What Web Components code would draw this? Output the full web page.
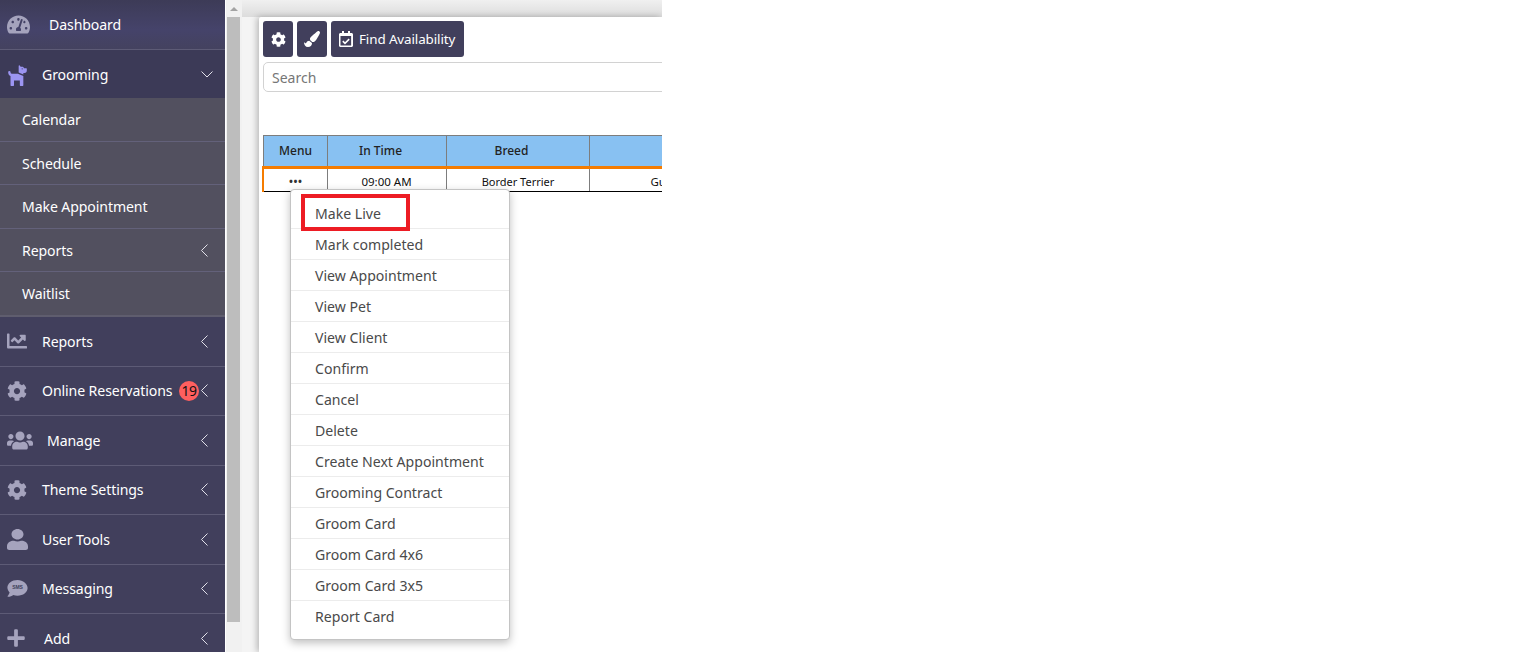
<!DOCTYPE html>
<html>
<head>
<meta charset="utf-8">
<title>Grooming</title>
<style>
  html, body { margin: 0; padding: 0; background: #fff; height: 100%; overflow: hidden; }
  body { font-family: "Noto Sans", "Open Sans", "Liberation Sans", sans-serif; }
</style>
</head>
<body>
<app-shell>
  <side-nav slot="nav">
    <nav-item label="Dashboard" text-x="49" h="49.5" tone="top" no-arrow>
      <svg slot="icon" width="23" height="21" viewBox="0 0 576 512"><path fill="#a5a3bd" d="M288 32C128.940 32 0 160.940 0 320c0 52.800 14.250 102.260 39.060 144.800 5.610 9.620 16.300 15.200 27.440 15.200h443c11.140 0 21.830-5.580 27.440-15.200C561.750 422.260 576 372.800 576 320c0-159.060-128.940-288-288-288zm0 64c14.710 0 26.580 10.130 30.320 23.650-1.110 2.260-2.640 4.230-3.450 6.670l-9.220 27.670c-5.130 3.490-10.970 6.010-17.640 6.010-17.670 0-32-14.330-32-32S270.330 96 288 96zM96 384c-17.670 0-32-14.330-32-32s14.330-32 32-32 32 14.330 32 32-14.330 32-32 32zm48-160c-17.670 0-32-14.330-32-32s14.330-32 32-32 32 14.330 32 32-14.330 32-32 32zm246.770-72.410l-61.330 184C343.130 347.330 352 364.540 352 384c0 11.720-3.380 22.550-8.880 32H232.880c-5.500-9.450-8.880-20.280-8.880-32 0-33.940 26.500-61.430 59.900-63.590l61.340-184.010c4.170-12.560 17.730-19.450 30.360-15.170 12.570 4.190 19.350 17.790 15.170 30.360zm14.660 57.200l15.520-46.550c3.470-1.290 7.130-2.230 11.050-2.230 17.670 0 32 14.330 32 32s-14.330 32-32 32c-11.380-.010-20.890-6.280-26.570-15.220zM480 384c-17.670 0-32-14.330-32-32s14.330-32 32-32 32 14.330 32 32-14.330 32-32 32z"/></svg>
    </nav-item>
    <nav-item label="Grooming" text-x="42" h="48.5" tone="open" open>
      <svg slot="icon" width="21" height="22" viewBox="0 0 576 512" preserveAspectRatio="none"><path fill="#9c95f2" d="M298.060 224 448 277.550V496a16 16 0 0 1-16 16H368a16 16 0 0 1-16-16V384H192V496a16 16 0 0 1-16 16H112a16 16 0 0 1-16-16V282.090C58.840 268.840 32 233.660 32 192a32 32 0 0 1 64 0 32.060 32.060 0 0 0 32 32ZM544 112v32a64 64 0 0 1-64 64H448v35.580L320 197.870V48c0-14.250 17.220-21.390 27.310-11.310L374.590 64h53.630c10.910 0 23.750 7.920 28.620 17.690L464 96h64A16 16 0 0 1 544 112Zm-112 0a16 16 0 1 0-16 16A16 16 0 0 0 432 112Z"/></svg>
    </nav-item>
    <sub-menu>
      <sub-item h="44">Calendar</sub-item>
      <sub-item h="43">Schedule</sub-item>
      <sub-item h="44">Make Appointment</sub-item>
      <sub-item h="43" arrow>Reports</sub-item>
      <sub-item h="43">Waitlist</sub-item>
    </sub-menu>
    <nav-item label="Reports" text-x="42" h="49.5">
      <svg slot="icon" width="20" height="20" viewBox="0 0 512 512"><path fill="#a5a3bd" d="M496 384H64V80c0-8.840-7.160-16-16-16H16C7.160 64 0 71.160 0 80v336c0 17.670 14.330 32 32 32h464c8.840 0 16-7.160 16-16v-32c0-8.840-7.160-16-16-16zM464 96H345.940c-21.380 0-32.090 25.850-16.970 40.970l32.400 32.400L288 242.750l-73.370-73.370c-12.500-12.500-32.760-12.500-45.250 0l-68.690 68.690c-6.250 6.250-6.250 16.380 0 22.630l22.620 22.620c6.250 6.250 16.380 6.250 22.630 0L192 237.250l73.370 73.370c12.500 12.500 32.760 12.500 45.250 0l96-96 32.400 32.400c15.120 15.120 40.970 4.410 40.970-16.970V112c.010-8.840-7.150-16-15.990-16z"/></svg>
    </nav-item>
    <nav-item label="Online Reservations" text-x="42" h="49.5" badge="19">
      <gear-icon slot="icon" size="20" color="#a5a3bd"></gear-icon>
    </nav-item>
    <nav-item label="Manage" text-x="47" h="49.5">
      <svg slot="icon" width="26" height="21" viewBox="0 0 640 512"><path fill="#a5a3bd" d="M96 224c35.300 0 64-28.700 64-64s-28.700-64-64-64-64 28.700-64 64 28.700 64 64 64zm448 0c35.300 0 64-28.700 64-64s-28.700-64-64-64-64 28.700-64 64 28.700 64 64 64zm32 32h-64c-17.600 0-33.500 7.100-45.100 18.600 40.300 22.100 68.900 62 75.100 109.400h66c17.700 0 32-14.300 32-32v-32c0-35.300-28.700-64-64-64zm-256 0c61.900 0 112-50.100 112-112S381.900 32 320 32 208 82.100 208 144s50.100 112 112 112zm76.800 32h-8.300c-20.800 10-43.900 16-68.500 16s-47.600-6-68.500-16h-8.300C179.600 288 128 339.600 128 403.200V432c0 26.500 21.500 48 48 48h288c26.500 0 48-21.500 48-48v-28.800c0-63.600-51.600-115.200-115.200-115.200zm-223.700-13.400C161.500 263.100 145.600 256 128 256H64c-35.300 0-64 28.700-64 64v32c0 17.700 14.300 32 32 32h65.900c6.300-47.400 34.900-87.300 75.200-109.400z"/></svg>
    </nav-item>
    <nav-item label="Theme Settings" text-x="42" h="49.5">
      <gear-icon slot="icon" size="20" color="#a5a3bd"></gear-icon>
    </nav-item>
    <nav-item label="User Tools" text-x="42" h="49.5">
      <svg slot="icon" width="21" height="21" viewBox="0 0 448 512" preserveAspectRatio="none"><path fill="#a5a3bd" d="M224 256c70.700 0 128-57.300 128-128S294.700 0 224 0 96 57.300 96 128s57.300 128 128 128zm89.600 32h-16.700c-22.200 10.200-46.900 16-72.900 16s-50.600-5.800-72.900-16h-16.700C60.200 288 0 348.200 0 422.400V464c0 26.500 21.500 48 48 48h352c26.500 0 48-21.500 48-48v-41.600c0-74.200-60.200-134.400-134.400-134.400z"/></svg>
    </nav-item>
    <nav-item label="Messaging" text-x="42" h="49.5">
      <svg slot="icon" width="21" height="20" viewBox="0 0 21 20"><path fill="#a5a3bd" d="M10.500 1C4.900 1 .4 4.400.4 8.600c0 1.800.8 3.500 2.200 4.800-.4 1.500-1.300 2.800-2 3.700-.2.300 0 .7.400.7 2.200 0 4-.9 5.200-1.800 1.300.5 2.800.8 4.300.8 5.600 0 10.100-3.400 10.100-7.700S16.100 1 10.500 1z"/><text x="10.500" y="10.300" text-anchor="middle" font-family="Liberation Sans" font-size="5" font-weight="700" fill="#413f5c">SMS</text></svg>
    </nav-item>
    <nav-item label="Add" text-x="44" h="49.500">
      <svg slot="icon" width="18" height="20" viewBox="0 0 448 512"><path fill="#a5a3bd" d="M416 208H272V64c0-17.670-14.330-32-32-32h-32c-17.670 0-32 14.330-32 32v144H32c-17.670 0-32 14.330-32 32v32c0 17.670 14.330 32 32 32h144v144c0 17.670 14.330 32 32 32h32c17.670 0 32-14.330 32-32V304h144c17.670 0 32-14.330 32-32v-32c0-17.670-14.330-32-32-32z"/></svg>
    </nav-item>
  </side-nav>
  <page-scrollbar slot="scroll"></page-scrollbar>
  <page-card slot="main">
    <tool-bar>
      <tool-button>
        <gear-icon size="15" color="#fff"></gear-icon>
      </tool-button>
      <tool-button>
        <svg width="16" height="16" viewBox="0 0 512 512"><path fill="#fff" d="M167.020 309.340c-40.120 2.580-76.530 17.860-97.190 72.300-2.350 6.210-8 9.980-14.590 9.980-11.110 0-45.460-27.670-55.250-34.350C0 439.620 37.930 512 128 512c75.860 0 128-43.770 128-120.190 0-3.110-.650-6.080-.970-9.130l-88.010-73.340zM457.890 0c-15.160 0-29.370 6.710-40.210 16.450C213.270 199.050 192 203.340 192 257.090c0 13.700 3.250 26.760 8.730 38.700l63.820 53.180c7.210 1.800 14.640 3.030 22.390 3.030 62.110 0 98.110-45.470 211.160-256.460 7.380-14.350 13.900-29.850 13.900-45.990C512 20.640 486 0 457.890 0z"/></svg>
      </tool-button>
      <tool-button label="Find Availability">
        <svg width="14" height="16" viewBox="0 0 448 512"><path fill="#fff" d="M400 64h-48V12c0-6.600-5.400-12-12-12h-40c-6.600 0-12 5.400-12 12v52H160V12c0-6.600-5.400-12-12-12h-40c-6.600 0-12 5.400-12 12v52H48C21.500 64 0 85.500 0 112v352c0 26.500 21.500 48 48 48h352c26.500 0 48-21.500 48-48V112c0-26.500-21.500-48-48-48zm-6 400H54a6 6 0 0 1-6-6V160h340v298a6 6 0 0 1-6 6z"/><path d="M122 325l70 70 134-134" fill="none" stroke="#fff" stroke-width="50"/></svg>
      </tool-button>
    </tool-bar>
    <search-box placeholder="Search"></search-box>
    <appt-table></appt-table>
  </page-card>
  <row-menu slot="main-over">
    <menu-entry>Make Live</menu-entry>
    <menu-entry>Mark completed</menu-entry>
    <menu-entry>View Appointment</menu-entry>
    <menu-entry>View Pet</menu-entry>
    <menu-entry>View Client</menu-entry>
    <menu-entry>Confirm</menu-entry>
    <menu-entry>Cancel</menu-entry>
    <menu-entry>Delete</menu-entry>
    <menu-entry>Create Next Appointment</menu-entry>
    <menu-entry>Grooming Contract</menu-entry>
    <menu-entry>Groom Card</menu-entry>
    <menu-entry>Groom Card 4x6</menu-entry>
    <menu-entry>Groom Card 3x5</menu-entry>
    <menu-entry last>Report Card</menu-entry>
  </row-menu>
</app-shell>

<script>
const FONT = '"Noto Sans", "Open Sans", "Liberation Sans", sans-serif';

// small helper so each element is just a class with a style+html string
function shadow(el, html) {
  el.attachShadow({mode: "open"});
  const template = document.createElement("template");
  template.innerHTML = html;
  el.shadowRoot.appendChild(template.content.cloneNode(true));
}

class AppShell extends HTMLElement {
  constructor() {
    super();
    shadow(this, `
    <style>
      :host { display: flex; width: 662px; height: 652px; overflow: hidden; position: relative; background: #f4f4f4; font-family: ${FONT}; }
      .nav { flex: 0 0 225px; height: 652px; overflow: hidden; }
      .gap { flex: 0 0 1px; background: #fff; }
      .scroll { flex: 0 0 16px; }
      .content { flex: 1; min-width: 0; display: flex; flex-direction: column; }
      .top { height: 17px; flex: none; background: linear-gradient(#f0f0f0, #dcdcdc); }
      .pad { flex: 1; padding-left: 17px; min-height: 0; background: #f4f4f4; }
      .over { position: absolute; left: 290px; top: 189px; }
    </style>
    <div class="nav"><slot name="nav"></slot></div>
    <div class="gap"></div>
    <div class="scroll"><slot name="scroll"></slot></div>
    <div class="content">
      <div class="top"></div>
      <div class="pad"><slot name="main"></slot></div>
    </div>
    <div class="over"><slot name="main-over"></slot></div>
    `);
  }
}

class SideNav extends HTMLElement {
  constructor() {
    super();
    shadow(this, `
    <style>
      :host { display: block; background: #413f5c; height: 652px; }
    </style>
    <slot></slot>
    `);
  }
}

class NavItem extends HTMLElement {
  constructor() {
    super();
    const h = this.getAttribute("h") || 49.5;
    const x = this.getAttribute("text-x") || 42;
    const badge = this.getAttribute("badge");
    const open = this.hasAttribute("open");
    const chev = open ? "M.5 .5l5.500 5.500L11.500 .5" : "M6.500 .5L.5 6.500l6 6";
    const size = open ? 'width="12" height="7"' : 'width="7" height="13"';
    shadow(this, `
    <style>
      :host { display: block; height: ${h}px; box-sizing: border-box; border-bottom: 1px solid #5d5b76; background: #413f5c; position: relative; }
      :host([tone="top"]) { background: linear-gradient(#3d3b57, #45436a 60%, #44425f); }
      :host([tone="open"]) { background: #3c3a57; border-bottom: 0; }
      .row { height: 100%; display: flex; align-items: center; color: #fff; font-size: 14.100px; letter-spacing: -.1px; box-sizing: border-box; }
      :host([tone="open"]) .row { padding-top: 2px; }
      .ic { width: ${x}px; flex: none; display: flex; align-items: center; padding-left: 7px; box-sizing: border-box; }
      .label { flex: 1; white-space: nowrap; }
      .badge { width: 20px; height: 20px; border-radius: 50%; background: #ff5f5f; color: #111; font-size: 14px; display: flex; align-items: center; justify-content: center; letter-spacing: -.6px; margin-right: 2px; }
      .chev { width: 24px; flex: none; display: flex; align-items: center; }
      svg { display: block; }
    </style>
    <div class="row">
      <span class="ic"><slot name="icon"></slot></span>
      <span class="label">${this.getAttribute("label")}</span>
      ${badge ? `<span class="badge">${badge}</span>` : ""}
      ${this.hasAttribute("no-arrow") ? "" : `<span class="chev"><svg ${size}><path d="${chev}" fill="none" stroke="#e2e1ea" stroke-width="1"/></svg></span>`}
    </div>
    `);
  }
}

class SubMenu extends HTMLElement {
  constructor() {
    super();
    shadow(this, `
    <style>
      :host { display: block; background: #52505f; border-bottom: 2px solid #5f5d6e; }
    </style>
    <slot></slot>
    `);
  }
}

class SubItem extends HTMLElement {
  constructor() {
    super();
    shadow(this, `
    <style>
      :host { display: flex; align-items: center; height: ${this.getAttribute("h")}px; box-sizing: border-box; padding-left: 22px; color: #fff; font-size: 14.100px; letter-spacing: -.1px; border-bottom: 1px solid #63617a; }
      :host(:last-child) { border-bottom: 0; }
      .t { flex: 1; }
      .a { width: 24px; }
      svg { display: block; }
    </style>
    <span class="t"><slot></slot></span>
    ${this.hasAttribute("arrow") ? `<span class="a"><svg width="7" height="13"><path d="M6.500 .5L.5 6.500l6 6" fill="none" stroke="#e2e1ea"/></svg></span>` : ""}
    `);
  }
}

class GearIcon extends HTMLElement {
  constructor() {
    super();
    const s = this.getAttribute("size") || 16;
    shadow(this, `
    <style>:host { display: block; width: ${s}px; height: ${s}px; } svg { display: block; }</style>
    <svg width="${s}" height="${s}" viewBox="0 0 512 512"><path fill="${this.getAttribute("color")}" d="M487.400 315.700l-42.600-24.600c4.300-23.200 4.300-47 0-70.200l42.600-24.600c4.900-2.800 7.100-8.600 5.500-14-11.100-35.600-30-67.800-54.700-94.600-3.800-4.100-10-5.100-14.800-2.300L380.800 110c-17.900-15.400-38.500-27.300-60.800-35.100V25.800c0-5.600-3.900-10.500-9.400-11.700-36.700-8.200-74.300-7.800-109.200 0-5.500 1.200-9.400 6.100-9.400 11.700V75c-22.200 7.900-42.800 19.800-60.800 35.100L88.700 85.500c-4.900-2.800-11-1.900-14.800 2.300-24.700 26.700-43.600 58.900-54.700 94.600-1.700 5.400.6 11.200 5.500 14L67.300 221c-4.300 23.200-4.300 47 0 70.200l-42.600 24.600c-4.900 2.800-7.100 8.600-5.500 14 11.100 35.600 30 67.800 54.700 94.600 3.800 4.100 10 5.100 14.800 2.300l42.600-24.600c17.900 15.400 38.500 27.300 60.800 35.100v49.200c0 5.600 3.900 10.500 9.400 11.700 36.700 8.200 74.300 7.800 109.200 0 5.500-1.200 9.400-6.100 9.400-11.700v-49.200c22.200-7.900 42.800-19.800 60.800-35.100l42.600 24.600c4.900 2.800 11 1.900 14.800-2.300 24.700-26.700 43.600-58.900 54.700-94.600 1.500-5.500-.7-11.300-5.600-14.100zM256 336c-44.100 0-80-35.900-80-80s35.900-80 80-80 80 35.900 80 80-35.900 80-80 80z"/></svg>
    `);
  }
}

class PageScrollbar extends HTMLElement {
  constructor() {
    super();
    shadow(this, `
    <style>
      :host { display: block; height: 652px; background: #f1f1f1; box-sizing: border-box; padding: 0 2px 0 1px; }
      .arrow { height: 17px; display: flex; align-items: center; justify-content: center; }
      .arrow i { display: block; width: 0; height: 0; border-left: 4px solid transparent; border-right: 4px solid transparent; border-bottom: 4px solid #a3a3a3; }
      .thumb { height: 605px; background: #bdbdbd; }
    </style>
    <div class="arrow"><i></i></div>
    <div class="thumb"></div>
    `);
  }
}

class PageCard extends HTMLElement {
  constructor() {
    super();
    shadow(this, `
    <style>
      :host { display: block; height: 100%; background: #fff; box-shadow: -2px 0 6px rgba(0,0,0,.25); padding: 4px 0 0 4px; box-sizing: border-box; overflow: hidden; border-top-left-radius: 2px; }
    </style>
    <slot></slot>
    `);
  }
}

class ToolBar extends HTMLElement {
  constructor() {
    super();
    shadow(this, `
    <style>
      :host { display: flex; gap: 4px; height: 36px; }
    </style>
    <slot></slot>
    `);
  }
}

class ToolButton extends HTMLElement {
  constructor() {
    super();
    const label = this.getAttribute("label");
    shadow(this, `
    <style>
      :host { display: flex; align-items: center; justify-content: center; gap: 6px; height: 36px; min-width: 30px; box-sizing: border-box; padding: ${label ? "0 9px 0 8px" : "0"}; background: #413f5c; border-radius: 3px; color: #fff; font-size: 13.400px; white-space: nowrap; letter-spacing: -.1px; }
    </style>
    <slot></slot>${label ? `<span>${label}</span>` : ""}
    `);
  }
}

class SearchBox extends HTMLElement {
  constructor() {
    super();
    shadow(this, `
    <style>
      :host { display: block; margin-top: 5px; width: 500px; height: 30px; }
      input { display: block; width: 100%; height: 100%; box-sizing: border-box; border: 1px solid #d2d2d2; border-radius: 5px; padding: 0 8px; font: 14px ${FONT}; color: #333; outline: 0; }
      input::placeholder { color: #767676; opacity: 1; }
    </style>
    <input placeholder="${this.getAttribute("placeholder")}">
    `);
  }
}

class ApptTable extends HTMLElement {
  constructor() {
    super();
    shadow(this, `
    <style>
      :host { display: block; margin: 43px 0 0 -1px; width: 520px; }
      table { border-collapse: collapse; table-layout: fixed; width: 520px; font-size: 11.500px; color: #111; }
      th { height: 32px; padding: 0 0 2px; background: #88c1f2; border: 1px solid #7d7d7d; border-bottom: 3px solid #f57c00; font-size: 12px; font-weight: 500; color: #222; box-sizing: border-box; }
      th:first-child { padding-left: 1px; }
      th:nth-child(2), th:nth-child(3) { padding-right: 12px; }
      td { height: 24px; padding: 2px 0 0; text-align: center; border-left: 1px solid #7d7d7d; border-right: 1px solid #7d7d7d; border-bottom: 1px solid #000; box-sizing: border-box; white-space: nowrap; overflow: hidden; }
      td:first-child { border-left: 2px solid #f57c00; font-size: 10.500px; font-weight: 700; letter-spacing: .5px; padding-left: 1px; color: #333; }
      td:nth-child(3) { font-size: 11px; padding-left: 1px; }
      td:last-child { text-align: left; padding-left: 61px; }
    </style>
    <table>
      <colgroup><col style="width:64px"><col style="width:119px"><col style="width:143px"><col style="width:194px"></colgroup>
      <tr><th>Menu</th><th>In Time</th><th>Breed</th><th></th></tr>
      <tr><td>&#8226;&#8226;&#8226;</td><td>09:00 AM</td><td>Border Terrier</td><td>Gu</td></tr>
    </table>
    `);
  }
}

class RowMenu extends HTMLElement {
  constructor() {
    super();
    shadow(this, `
    <style>
      :host { display: block; width: 220px; height: 451px; box-sizing: border-box; padding-top: 8px; background: #fff; border: 1px solid #c4c4c4; border-radius: 4px; box-shadow: 0 3px 8px rgba(0,0,0,.25); position: relative; }
      .mark { position: absolute; left: 10px; top: 4px; width: 109px; height: 37px; box-sizing: border-box; border: 4px solid #ed1c24; }
    </style>
    <slot></slot>
    <div class="mark"></div>
    `);
  }
}

class MenuEntry extends HTMLElement {
  constructor() {
    super();
    shadow(this, `
    <style>
      :host { display: flex; align-items: center; height: 31px; box-sizing: border-box; padding-left: 24px; border-bottom: 1px solid #ececec; color: #4a4a4a; font-size: 14.100px; white-space: nowrap; }
      :host([last]) { border-bottom: 0; }
    </style>
    <slot></slot>
    `);
  }
}

window.customElements.define("app-shell", AppShell);
window.customElements.define("side-nav", SideNav);
window.customElements.define("nav-item", NavItem);
window.customElements.define("sub-menu", SubMenu);
window.customElements.define("sub-item", SubItem);
window.customElements.define("gear-icon", GearIcon);
window.customElements.define("page-scrollbar", PageScrollbar);
window.customElements.define("page-card", PageCard);
window.customElements.define("tool-bar", ToolBar);
window.customElements.define("tool-button", ToolButton);
window.customElements.define("search-box", SearchBox);
window.customElements.define("appt-table", ApptTable);
window.customElements.define("row-menu", RowMenu);
window.customElements.define("menu-entry", MenuEntry);
</script>
</body>
</html>
